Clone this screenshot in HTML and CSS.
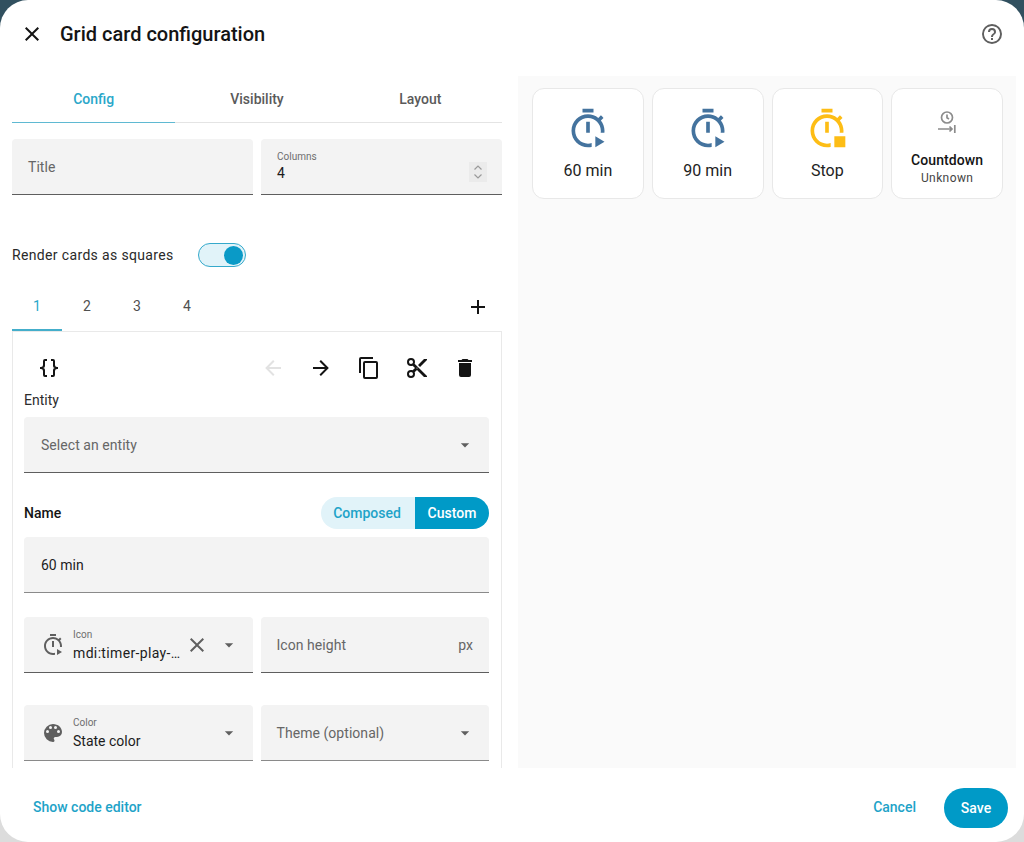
FILE: index.html
```html
<!DOCTYPE html>
<html lang="en">
<head>
<meta charset="utf-8">
<title>Grid card configuration</title>
<link rel="stylesheet" href="styles.css">
</head>
<body>
<div class="dialog">
  <header class="head">
    <svg class="icon dark" viewBox="0 0 24 24"><path d="M19,6.41L17.59,5L12,10.59L6.41,5L5,6.41L10.59,12L5,17.59L6.41,19L12,13.41L17.59,19L19,17.59L13.41,12L19,6.41Z"/></svg>
    <h1 class="title">Grid card configuration</h1>
    <svg class="icon help" viewBox="0 0 24 24"><path d="M11,18H13V16H11V18M12,2A10,10 0 0,0 2,12A10,10 0 0,0 12,22A10,10 0 0,0 22,12A10,10 0 0,0 12,2M12,20C7.59,20 4,16.41 4,12C4,7.59 7.59,4 12,4C16.41,4 20,7.59 20,12C20,16.41 16.41,20 12,20M12,6A4,4 0 0,0 8,10H10A2,2 0 0,1 12,8A2,2 0 0,1 14,10C14,12 11,11.75 11,15H13C13,12.75 16,12.5 16,10A4,4 0 0,0 12,6Z"/></svg>
  </header>
  <div class="body">
    <section class="editor">
      <nav class="tabs">
        <span class="tab active">Config</span>
        <span class="tab">Visibility</span>
        <span class="tab">Layout</span>
      </nav>
      <div class="row top-fields">
        <div class="field"><span class="placeholder">Title</span></div>
        <div class="field with-label">
          <div class="stack grow"><span class="label">Columns</span><span class="value">4</span></div>
          <span class="spinner">
            <svg viewBox="0 0 12 20"><path d="M2.5 7.5L6 4l3.5 3.5M2.5 12.5L6 16l3.5-3.5"/></svg>
          </span>
        </div>
      </div>
      <div class="switch-row">
        <span class="switch-label">Render cards as squares</span>
        <span class="switch"><span class="knob"></span></span>
      </div>
      <div class="subtabs">
        <span class="subtab active">1</span>
        <span class="subtab">2</span>
        <span class="subtab">3</span>
        <span class="subtab">4</span>
        <svg class="icon dark plus" viewBox="0 0 24 24"><path d="M19,13H13V19H11V13H5V11H11V5H13V11H19V13Z"/></svg>
      </div>
      <div class="card-editor">
        <div class="toolbar">
          <svg class="icon dark braces" viewBox="0 0 24 24"><path d="M8,3A2,2 0 0,0 6,5V9A2,2 0 0,1 4,11H3V13H4A2,2 0 0,1 6,15V19A2,2 0 0,0 8,21H10V19H8V14A2,2 0 0,0 6,12A2,2 0 0,0 8,10V5H10V3M16,3A2,2 0 0,1 18,5V9A2,2 0 0,0 20,11H21V13H20A2,2 0 0,0 18,15V19A2,2 0 0,1 16,21H14V19H16V14A2,2 0 0,1 18,12A2,2 0 0,1 16,10V5H14V3H16Z"/></svg>
          <div class="tools">
            <svg class="icon faint" viewBox="0 0 24 24"><path d="M20,11V13H8L13.5,18.5L12.08,19.92L4.16,12L12.08,4.08L13.5,5.5L8,11H20Z"/></svg>
            <svg class="icon dark" viewBox="0 0 24 24"><path d="M4,11V13H16L10.5,18.5L11.92,19.92L19.84,12L11.92,4.08L10.5,5.5L16,11H4Z"/></svg>
            <svg class="icon dark" viewBox="0 0 24 24"><path d="M19,21H8V7H19M19,5H8A2,2 0 0,0 6,7V21A2,2 0 0,0 8,23H19A2,2 0 0,0 21,21V7A2,2 0 0,0 19,5M16,1H4A2,2 0 0,0 2,3V17H4V3H16V1Z"/></svg>
            <svg class="icon dark" viewBox="0 0 24 24"><path d="M19,3L13,9L15,11L22,4V3M12,12.5A0.5,0.5 0 0,1 11.5,12A0.5,0.5 0 0,1 12,11.5A0.5,0.5 0 0,1 12.5,12A0.5,0.5 0 0,1 12,12.5M6,20A2,2 0 0,1 4,18C4,16.89 4.9,16 6,16A2,2 0 0,1 8,18C8,19.11 7.1,20 6,20M6,8A2,2 0 0,1 4,6C4,4.89 4.9,4 6,4A2,2 0 0,1 8,6C8,7.11 7.1,8 6,8M9.64,7.64C9.87,7.14 10,6.59 10,6A4,4 0 0,0 6,2A4,4 0 0,0 2,6A4,4 0 0,0 6,10C6.59,10 7.14,9.87 7.64,9.64L10,12L7.64,14.36C7.14,14.13 6.59,14 6,14A4,4 0 0,0 2,18A4,4 0 0,0 6,22A4,4 0 0,0 10,18C10,17.41 9.87,16.86 9.64,16.36L12,14L19,21H22V20L9.64,7.64Z"/></svg>
            <svg class="icon dark" viewBox="0 0 24 24"><path d="M19,4H15.5L14.5,3H9.5L8.5,4H5V6H19M6,19A2,2 0 0,0 8,21H16A2,2 0 0,0 18,19V7H6V19Z"/></svg>
          </div>
        </div>
        <div class="entity-label">Entity</div>
        <div class="field entity-select">
          <span class="placeholder grow">Select an entity</span>
          <svg class="caret" viewBox="0 0 24 24"><path d="M7,10L12,15L17,10H7Z"/></svg>
        </div>
        <div class="name-row">
          <span class="name-label">Name</span>
          <div class="segments">
            <span class="segment off">Composed</span>
            <span class="segment on">Custom</span>
          </div>
        </div>
        <div class="field soft"><span class="value">60 min</span></div>
        <div class="row icon-row">
          <div class="field lead">
            <svg class="icon gray" viewBox="0 0 24 24"><path d="M13 8H11V14H13V8M9 1V3H15V1H9M19.03 7.39L20.45 5.97C20 5.46 19.55 5 19.04 4.56L17.62 6C16.07 4.74 14.12 4 12 4C7.03 4 3 8.03 3 13S7.03 22 12 22C12.7 22 13.37 21.92 14 21.77V19.7C13.36 19.9 12.69 20 12 20C8.13 20 5 16.87 5 13S8.13 6 12 6 19 9.13 19 13C19 13.34 18.96 13.67 18.92 14H20.94C20.97 13.67 21 13.34 21 13C21 10.88 20.26 8.93 19.03 7.39M16 16V22L21 19L16 16Z"/></svg>
            <div class="stack fixed"><span class="label">Icon</span><span class="value icon-name">mdi:timer-play-…</span></div>
            <svg class="icon gray clear" viewBox="0 0 24 24"><path d="M19,6.41L17.59,5L12,10.59L6.41,5L5,6.41L10.59,12L5,17.59L6.41,19L12,13.41L17.59,19L19,17.59L13.41,12L19,6.41Z"/></svg>
            <svg class="caret" viewBox="0 0 24 24"><path d="M7,10L12,15L17,10H7Z"/></svg>
          </div>
          <div class="field">
            <span class="placeholder grow">Icon height</span>
            <span class="placeholder">px</span>
          </div>
        </div>
        <div class="row color-row">
          <div class="field lead soft">
            <svg class="icon gray" viewBox="0 0 24 24"><path d="M17.5,12A1.5,1.5 0 0,1 16,10.5A1.5,1.5 0 0,1 17.5,9A1.5,1.5 0 0,1 19,10.5A1.5,1.5 0 0,1 17.5,12M14.5,8A1.5,1.5 0 0,1 13,6.5A1.5,1.5 0 0,1 14.5,5A1.5,1.5 0 0,1 16,6.5A1.5,1.5 0 0,1 14.5,8M9.5,8A1.5,1.5 0 0,1 8,6.5A1.5,1.5 0 0,1 9.5,5A1.5,1.5 0 0,1 11,6.5A1.5,1.5 0 0,1 9.5,8M6.5,12A1.5,1.5 0 0,1 5,10.5A1.5,1.5 0 0,1 6.5,9A1.5,1.5 0 0,1 8,10.5A1.5,1.5 0 0,1 6.5,12M12,3A9,9 0 0,0 3,12A9,9 0 0,0 12,21A1.5,1.5 0 0,0 13.5,19.5C13.5,19.11 13.35,18.76 13.11,18.5C12.88,18.23 12.73,17.88 12.73,17.5A1.5,1.5 0 0,1 14.23,16H16A5,5 0 0,0 21,11C21,6.58 16.97,3 12,3Z"/></svg>
            <div class="stack grow"><span class="label">Color</span><span class="value">State color</span></div>
            <svg class="caret" viewBox="0 0 24 24"><path d="M7,10L12,15L17,10H7Z"/></svg>
          </div>
          <div class="field end-caret soft">
            <span class="placeholder grow">Theme (optional)</span>
            <svg class="caret" viewBox="0 0 24 24"><path d="M7,10L12,15L17,10H7Z"/></svg>
          </div>
        </div>
      </div>
    </section>
    <section class="preview">
      <div class="grid">
        <div class="tile">
          <svg class="tile-icon blue" viewBox="0 0 24 24"><path d="M13 8H11V14H13V8M9 1V3H15V1H9M19.03 7.39L20.45 5.97C20 5.46 19.55 5 19.04 4.56L17.62 6C16.07 4.74 14.12 4 12 4C7.03 4 3 8.03 3 13S7.03 22 12 22C12.7 22 13.37 21.92 14 21.77V19.7C13.36 19.9 12.69 20 12 20C8.13 20 5 16.87 5 13S8.13 6 12 6 19 9.13 19 13C19 13.34 18.96 13.67 18.92 14H20.94C20.97 13.67 21 13.34 21 13C21 10.88 20.26 8.93 19.03 7.39M16 16V22L21 19L16 16Z"/></svg>
          <span class="tile-name">60 min</span>
        </div>
        <div class="tile">
          <svg class="tile-icon blue" viewBox="0 0 24 24"><path d="M13 8H11V14H13V8M9 1V3H15V1H9M19.03 7.39L20.45 5.97C20 5.46 19.55 5 19.04 4.56L17.62 6C16.07 4.74 14.12 4 12 4C7.03 4 3 8.03 3 13S7.03 22 12 22C12.7 22 13.37 21.92 14 21.77V19.7C13.36 19.9 12.69 20 12 20C8.13 20 5 16.87 5 13S8.13 6 12 6 19 9.13 19 13C19 13.34 18.96 13.67 18.92 14H20.94C20.97 13.67 21 13.34 21 13C21 10.88 20.26 8.93 19.03 7.39M16 16V22L21 19L16 16Z"/></svg>
          <span class="tile-name">90 min</span>
        </div>
        <div class="tile">
          <svg class="tile-icon amber" viewBox="0 0 24 24"><path d="M13 8H11V14H13V8M9 1V3H15V1H9M19.03 7.39L20.45 5.97C20 5.46 19.55 5 19.04 4.56L17.62 6C16.07 4.74 14.12 4 12 4C7.03 4 3 8.03 3 13S7.03 22 12 22C12.7 22 13.37 21.92 14 21.77V19.7C13.36 19.9 12.69 20 12 20C8.13 20 5 16.87 5 13S8.13 6 12 6 19 9.13 19 13C19 13.34 18.96 13.67 18.92 14H20.94C20.97 13.67 21 13.34 21 13C21 10.88 20.26 8.93 19.03 7.39M16 16H22V22H16V16Z"/></svg>
          <span class="tile-name">Stop</span>
        </div>
        <div class="tile sensor">
          <svg class="sensor-icon" viewBox="0 0 24 24">
            <circle class="line" cx="12" cy="8.5" r="5.5"/>
            <path class="line" d="M12 5.5v3.3l2 1.2"/>
            <path class="line" d="M3 20h14M14.5 17.5l2.5 2.5-2.5 2.5"/>
            <path class="line" d="M19.8 16v8"/>
          </svg>
          <span class="sensor-name">Countdown</span>
          <span class="sensor-state">Unknown</span>
        </div>
      </div>
    </section>
  </div>
  <footer class="foot">
    <span class="link">Show code editor</span>
    <span class="link cancel">Cancel</span>
    <span class="save">Save</span>
  </footer>
</div>
</body>
</html>
```
FILE: styles.css
```css
html, body { margin: 0; padding: 0; height: 842px; overflow: hidden; }
body { background: linear-gradient(#31505f 0 50%, #dcdcdc 50% 100%); font-family: Roboto, "Liberation Sans", sans-serif; color: #141414; font-size: 14px; }
.dialog { height: 842px; background: #fff; border-radius: 28px; overflow: hidden; display: flex; flex-direction: column; }
.icon { width: 24px; height: 24px; flex: none; fill: currentColor; display: block; }
.dark { color: #141414; }
.gray { color: #5f5f5f; }
.faint { color: #e2e2e2; }
.caret { width: 20px; height: 20px; flex: none; fill: #5f5f5f; display: block; margin: 0 2px; }
.head { height: 76px; flex: none; display: flex; align-items: center; padding: 0 20px 8px; box-sizing: border-box; }
.title { flex: 1; margin: 0 0 0 16px; font-size: 20px; font-weight: 500; line-height: 24px; }
.help { color: #5f5f5f; }
.body { flex: 1; min-height: 0; display: flex; }
.editor { width: 490px; margin-left: 12px; flex: none; overflow: hidden; }
.tabs { height: 46px; display: flex; border-bottom: 1px solid #e4e4e4; }
.tab { flex: 1; text-align: center; line-height: 46px; font-weight: 500; color: #5a5a5a; }
.tab.active { color: #2aa7c9; border-bottom: 1px solid #5fb9d2; height: 46px; }
.row { display: grid; grid-template-columns: 1fr 1fr; gap: 8px; }
.top-fields { margin-top: 16px; }
.field { height: 56px; box-sizing: border-box; background: #f3f3f3; border-radius: 4px 4px 0 0; border-bottom: 1px solid #5e5e5e; padding: 1px 16px 0; display: flex; align-items: center; min-width: 0; }
.field.soft { border-bottom-color: #8a8a8a; }
.placeholder { color: #666; font-size: 14px; letter-spacing: .05px; }
.grow { flex: 1; min-width: 0; }
.stack { display: flex; flex-direction: column; align-self: flex-start; padding-top: 10px; }
.label { font-size: 10px; line-height: 14px; color: #6e6e6e; }
.value { font-size: 14px; line-height: 22px; color: #1c1c1c; white-space: nowrap; }
.stack .value { margin-top: -2px; }
.lead .stack .value { margin-top: 0; }
.icon-name { letter-spacing: .35px; }
.spinner { width: 18px; height: 20px; background: #ebebeb; margin-right: -1px; margin-top: 10px; display: block; }
.spinner svg { width: 18px; height: 20px; display: block; fill: none; stroke: #9a9a9a; stroke-width: 1.2; }
.switch-row { display: flex; align-items: center; height: 24px; margin-top: 48px; gap: 24px; }
.switch-label { letter-spacing: .35px; color: #2a2a2a; }
.switch { width: 44px; height: 22px; border: 1px solid #35a9cb; border-radius: 12px; background: #e1f3f9; display: flex; align-items: center; justify-content: flex-end; padding-right: 2px; }
.knob { width: 19px; height: 19px; background: #0a9ac7; border-radius: 50%; display: block; }
.subtabs { display: flex; align-items: center; height: 47px; margin-top: 17px; }
.subtab { width: 50px; height: 47px; box-sizing: border-box; text-align: center; line-height: 45px; color: #505050; }
.subtab.active { color: #2aa7c9; border-bottom: 2px solid #44aecb; }
.plus { margin: 0 12px 2px auto; }
.card-editor { border: 1px solid #e9e9e9; padding: 0 12px 40px 11px; height: 500px; }
.card-editor .field { padding-left: 17px; }
.card-editor .row .field + .field { padding-left: 16px; }
.toolbar { display: flex; align-items: center; height: 48px; margin-top: 12px; padding-left: 13px; }
.braces { margin-right: auto; }
.tools { display: flex; gap: 24px; margin-right: 12px; }
.entity-label { line-height: 16px; color: #2c2c2c; }
.entity-select { margin-top: 9px; padding-right: 12px; }
.end-caret { padding-right: 12px; }
.name-row { display: flex; align-items: center; justify-content: space-between; height: 32px; margin-top: 24px; margin-bottom: 8px; }
.name-label { font-weight: 500; }
.segments { display: flex; height: 32px; border-radius: 16px; overflow: hidden; font-weight: 500; }
.segment { line-height: 32px; box-sizing: border-box; text-align: center; }
.segment.off { background: #e1f3f9; color: #1ea3c8; width: 94px; padding-right: 2px; }
.segment.on { background: #009ac7; color: #fff; width: 74px; }
.icon-row { margin-top: 24px; }
.color-row { margin-top: 32px; }
.lead { padding-right: 12px; }
.lead > .icon:first-child { margin-right: 8px; }
.fixed { width: 109px; flex: none; }
.clear { margin-left: 3px; margin-right: 8px; }
.preview { flex: 1; margin: 0 8px 0 16px; background: #fafafa; padding: 12px 13px 0 14px; }
.grid { display: grid; grid-template-columns: repeat(4, 1fr); gap: 8px; }
.tile { height: 111px; box-sizing: border-box; background: #fff; border: 1px solid #e8e8e8; border-radius: 12px; display: flex; flex-direction: column; align-items: center; padding-top: 18px; }
.tile-icon { width: 44px; height: 44px; fill: currentColor; display: block; }
.blue { color: #44739e; }
.amber { color: #fdbd15; }
.tile-name { font-size: 16px; line-height: 20px; margin-top: 10px; color: #222; }
.sensor-icon { width: 24px; height: 24px; display: block; margin-top: 2px; }
.line { fill: none; stroke: #8c8c8c; stroke-width: 1.7; }
.sensor-name { font-weight: 500; line-height: 18px; margin-top: 18px; letter-spacing: .1px; }
.sensor-state { font-size: 12px; line-height: 16px; margin-top: 1px; letter-spacing: .4px; color: #444; }
.foot { height: 74px; flex: none; box-sizing: border-box; display: flex; align-items: center; padding: 6px 16px 0 33px; font-weight: 500; }
.link { color: #1ea3c8; margin-bottom: 2px; }
.cancel { margin-left: auto; margin-right: 28px; }
.save { width: 64px; height: 40px; line-height: 40px; text-align: center; border-radius: 20px; background: #009ac7; color: #fff; }
```
